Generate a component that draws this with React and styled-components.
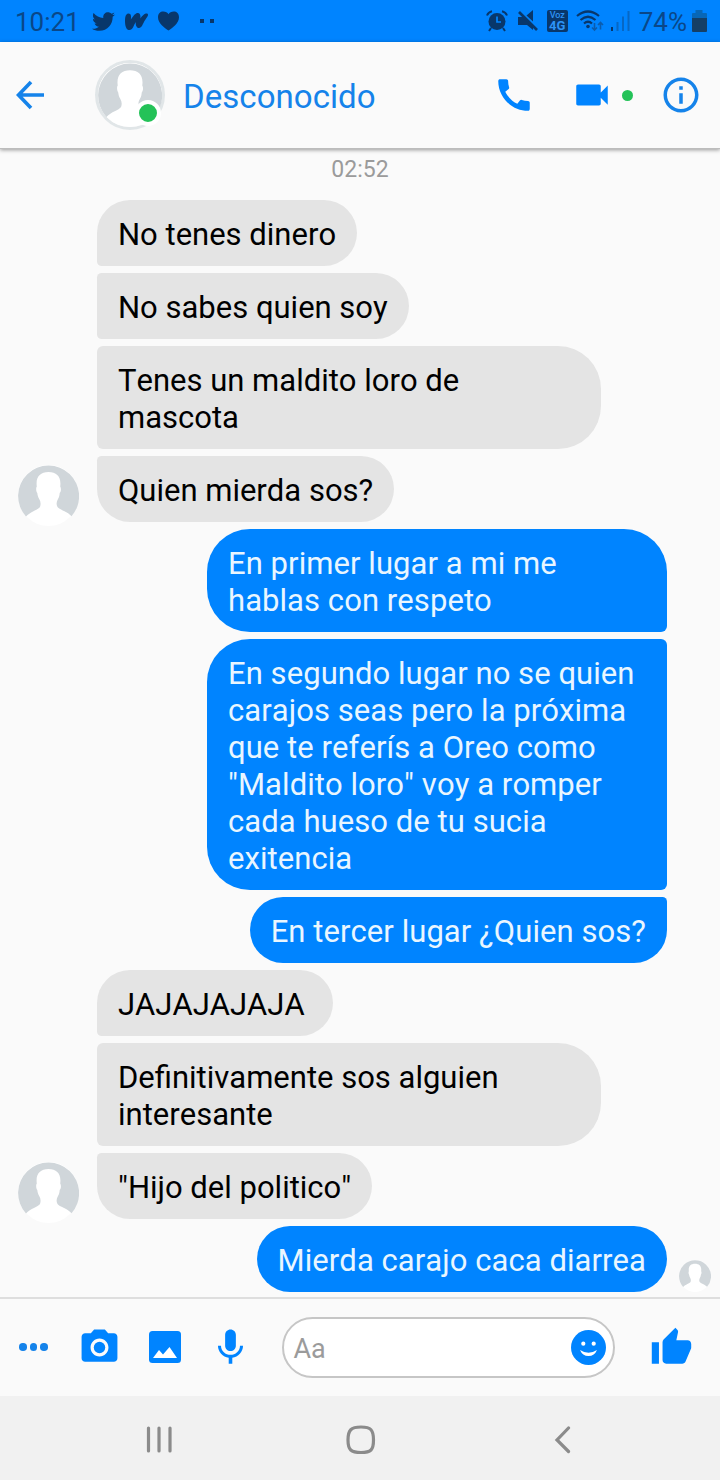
import React from "react";
import styled, { createGlobalStyle } from "styled-components";
import { FaTwitter } from "react-icons/fa";
import { SiWattpad } from "react-icons/si";
import {
    MdCall,
    MdVideocam,
    MdInfoOutline,
    MdPhotoCamera,
    MdMic,
    MdThumbUp,
} from "react-icons/md";

const messages = [
    { text: "No tenes dinero", pos: "first" },
    { text: "No sabes quien soy", pos: "middle" },
    { text: "Tenes un maldito loro de mascota", pos: "middle" },
    { text: "Quien mierda sos?", pos: "last" },
    { text: "En primer lugar a mi me hablas con respeto", pos: "first", mine: true },
    {
        text: 'En segundo lugar no se quien carajos seas pero la próxima que te referís a Oreo como "Maldito loro" voy a romper cada hueso de tu sucia exitencia',
        pos: "middle",
        mine: true,
    },
    { text: "En tercer lugar ¿Quien sos?", pos: "last", mine: true },
    { text: "JAJAJAJAJA\u00a0", pos: "first" },
    { text: "Definitivamente sos alguien interesante", pos: "middle" },
    { text: '"Hijo del politico"', pos: "last" },
    { text: "Mierda carajo caca diarrea", pos: "single", mine: true, seen: true },
];

const Person = ({ size }) => (
    <svg width={size} height={size} viewBox="0 0 61 61">
        <circle cx="30.5" cy="30.5" r="30.5" fill="#fff" />
        <path
            d="M8 51.5A30.5 30.5 0 1 1 53.5 51.2C49 46 41.5 45 39.5 42C38 39 38.5 36.5 40 34C41.3 32 41.5 30 41.7 28C43.5 26 43 22.5 42.2 21.5C43.5 12 39 7 30.5 7C22 7 17.5 12 18.8 21.5C18 22.5 17.8 26 19.3 28C19.5 30 20 32 21.2 34C22.7 36.5 23 39 22 42C20 45 12.5 46.5 8 51.5Z"
            fill="#d0d6da"
        />
    </svg>
);

const App = () => (
    <Screen>
        <Global />
        <StatusBar>
            <Clock>10:21</Clock>
            <FaTwitter size={23} />
            <SiWattpad size={23} />
            <svg width="21" height="20" viewBox="0 0 22 20" fill="currentColor">
                <path d="M11 20C7 17 0 12.5 0 6C0 2 2.5 0 5.5 0C8 0 10 1 11 3C12 1 14 0 16.5 0C19.5 0 22 2 22 6C22 12.5 15 17 11 20Z" />
            </svg>
            <Dots width="14" height="4" viewBox="0 0 14 4" fill="currentColor">
                <path d="M0 0h4v4H0zM10 0h4v4h-4z" />
            </Dots>
            <StatusRight>
                <svg width="22" height="22" viewBox="0 0 22 22" fill="none" stroke="#08376b">
                    <circle cx="11" cy="11.5" r="8.5" fill="#08376b" stroke="none" />
                    <path d="M1 5.5A7 7 0 0 1 6 1.2M21 5.5A7 7 0 0 0 16 1.2M5 18l-2 3M17 18l2 3" strokeWidth="2" />
                    <path d="M11 6.5V12h4" stroke="#0084ff" strokeWidth="1.7" />
                </svg>
                <Mute width="20" height="22" viewBox="0 0 20 22" fill="#08376b">
                    <path d="M0 7h5l10 9.5V20l-6-5H0ZM8.5 5.5L15 0v11.5Z" />
                    <path d="M1 2l18 18" stroke="#08376b" strokeWidth="2.6" />
                </Mute>
                <VoiceBadge>
                    <span>Voz</span>
                    <b>4G</b>
                </VoiceBadge>
                <Wifi width="28" height="22" viewBox="0 0 28 22" fill="none" stroke="#08376b" strokeWidth="2.2">
                    <path d="M1 6Q12 -3 23 6M4.5 10Q12 3.5 19.5 10M8 13.5Q12 10 16 13.5" />
                    <circle cx="12" cy="16.5" r="1.8" fill="#08376b" stroke="none" />
                    <path d="M18.5 13v7M16 17.5l2.5 2.5L21 17.5M24.5 19.5v-7M22 15l2.5-2.5L27 15" stroke="#0b5cad" strokeWidth="1.6" />
                </Wifi>
                <svg width="19" height="20" viewBox="0 0 19 20">
                    <path d="M0 16h2v4H0z" fill="#08376b" />
                    <path d="M5.5 11h2v9h-2zM11 5.5h2V20h-2zM16.5 0h2v20h-2z" fill="#0767c4" />
                </svg>
                <Percent>74%</Percent>
                <svg width="15" height="22" viewBox="0 0 15 22">
                    <path d="M3.5 0h7v3H14q1 0 1 1v4H0V4q0-1 1-1h2.5z" fill="#0767b8" />
                    <path d="M0 8h15v13q0 1-1 1H1q-1 0-1-1z" fill="#153f66" />
                </svg>
            </StatusRight>
        </StatusBar>
        <Header>
            <svg width="29" height="30" viewBox="0 0 29 30" fill="none" stroke="#1583ea" strokeWidth="3.6">
                <path d="M28 15H3M15 2L2.5 15L15 28" />
            </svg>
            <HeaderAvatar>
                <Person size={64} />
                <Online />
            </HeaderAvatar>
            <Name>Desconocido</Name>
            <Actions>
                <MdCall size={42} />
                <VideoCall>
                    <MdVideocam size={42} />
                    <Dot />
                </VideoCall>
                <MdInfoOutline size={42} color="#1583ea" />
            </Actions>
        </Header>
        <Thread>
            <Time>02:52</Time>
            {messages.map((m) => (
                <Row key={m.text} $mine={m.mine}>
                    {!m.mine && (
                        <Side>{m.pos === "last" && <Person size={61} />}</Side>
                    )}
                    <Bubble $mine={m.mine} $pos={m.pos}>
                        {m.text}
                    </Bubble>
                    {m.mine && <Seen>{m.seen && <Person size={32} />}</Seen>}
                </Row>
            ))}
        </Thread>
        <Composer>
            <More>
                <i />
                <i />
                <i />
            </More>
            <Tools>
                <MdPhotoCamera size={43} />
                <svg width="32" height="32" viewBox="0 0 32 32">
                    <rect width="32" height="32" rx="3.5" fill="#0084ff" />
                    <path d="M4 27L10 19L14 23.5L20.5 16L28 27Z" fill="#fff" />
                </svg>
                <MdMic size={43} />
            </Tools>
            <Input>
                <span>Aa</span>
                <svg width="35" height="35" viewBox="0 0 35 35">
                    <circle cx="17.5" cy="17.5" r="17.5" fill="#0084ff" />
                    <circle cx="12.3" cy="13.7" r="2.1" fill="#fff" />
                    <circle cx="22.7" cy="13.7" r="2.1" fill="#fff" />
                    <path d="M9 20Q17.5 25.5 26 20Q23.5 26 17.5 26Q11.5 26 9 20Z" fill="#fff" />
                </svg>
            </Input>
            <MdThumbUp size={43} />
        </Composer>
        <NavBar>
            <svg width="26" height="28" viewBox="0 0 26 28" {...navStroke}>
                <path d="M2.5 2v23M13 2v23M24 2v23" />
            </svg>
            <svg width="30" height="30" viewBox="0 0 30 30" {...navStroke}>
                <path d="M15 2C25 2 27.5 5 27.5 15C27.5 25 25 27.5 15 27.5C5 27.5 2 25 2 15C2 5 5 2 15 2Z" />
            </svg>
            <svg width="18" height="28" viewBox="0 0 18 28" {...navStroke}>
                <path d="M14.5 2L3 14L14.5 25.5" />
            </svg>
        </NavBar>
    </Screen>
);

export default App;

const navStroke = {
    fill: "none",
    stroke: "#8b8b8b",
    strokeWidth: 3.2,
    strokeLinecap: "round",
};

const Global = createGlobalStyle`
    * {
        box-sizing: border-box;
    }
    body {
        margin: 0;
        font-family: Roboto, sans-serif;
        background: #fafafa;
    }
    svg {
        display: block;
        flex-shrink: 0;
    }
`;

const Screen = styled.div`
    width: 720px;
    height: 1480px;
    display: flex;
    flex-direction: column;
    overflow: hidden;
    background: #fafafa;
`;

const StatusBar = styled.div`
    height: 42px;
    background: #0084ff;
    color: #08376b;
    display: flex;
    align-items: center;
    padding: 0 13px 0 15px;

    > svg {
        margin-right: 10px;
    }
`;

const Dots = styled.svg`
    margin-left: 11px;
`;

const Clock = styled.div`
    width: 77px;
    font-size: 26px;
    color: #0a4788;
    padding-top: 2px;
`;

const StatusRight = styled.div`
    margin-left: auto;
    display: flex;
    align-items: center;
    gap: 9px;
    margin-bottom: 1px;
`;

const Mute = styled.svg`
    margin-left: 1px;
`;

const Wifi = styled.svg`
    margin: 0 -2px 0 -1px;
`;

const VoiceBadge = styled.div`
    width: 21px;
    height: 22px;
    border-radius: 2px;
    background: #08376b;
    color: #2d93f5;
    display: flex;
    flex-direction: column;
    align-items: center;
    font-size: 9px;
    line-height: 10px;
    font-weight: 500;

    b {
        font-size: 13px;
        line-height: 12px;
    }
`;

const Percent = styled.div`
    font-size: 26px;
    color: #0a4788;
    padding-top: 3px;
    margin-right: -4px;
`;

const Header = styled.div`
    height: 107px;
    display: flex;
    align-items: center;
    padding: 0 18px 0 16px;
    position: relative;
    border-bottom: 1px solid #bcbcbc;
    box-shadow: 0 1px 4px rgba(0, 0, 0, 0.4);
`;

const HeaderAvatar = styled.div`
    width: 70px;
    height: 70px;
    margin-left: 50px;
    border: 3px solid #e1e6e8;
    border-radius: 50%;
    position: relative;
`;

const Online = styled.div`
    position: absolute;
    right: 1px;
    bottom: 1px;
    width: 26px;
    height: 26px;
    border: 4px solid #fff;
    border-radius: 50%;
    background: #24c258;
`;

const Name = styled.div`
    margin-left: 18px;
    padding-top: 2px;
    font-size: 33px;
    letter-spacing: 0.05px;
    color: #1583ea;
`;

const Actions = styled.div`
    margin-left: auto;
    display: flex;
    align-items: center;
    color: #0084ff;
`;

const VideoCall = styled.div`
    display: flex;
    align-items: center;
    margin: 0 27px 0 36px;
`;

const Dot = styled.div`
    width: 11px;
    height: 11px;
    margin-left: 9px;
    border-radius: 50%;
    background: #24c258;
`;

const Thread = styled.div`
    height: 1148px;
    display: flex;
    flex-direction: column;
    gap: 7px;
`;

const Time = styled.div`
    height: 44px;
    padding-top: 7px;
    text-align: center;
    font-size: 23px;
    line-height: 28px;
    color: #9b9b9b;
`;

const Row = styled.div`
    display: flex;
    align-items: flex-end;
    justify-content: ${(props) => (props.$mine ? "flex-end" : "flex-start")};
`;

const Side = styled.div`
    width: 97px;
    padding-left: 18px;
    margin-bottom: -4px;
`;

const Seen = styled.div`
    width: 53px;
    padding-left: 12px;
`;

const R = "43px";
const corners = {
    first: `${R} ${R} ${R} 6px`,
    middle: `6px ${R} ${R} 6px`,
    last: `6px ${R} ${R} ${R}`,
    single: R,
};
const mineCorners = {
    first: `${R} ${R} 6px ${R}`,
    middle: `${R} 6px 6px ${R}`,
    last: `${R} 6px ${R} ${R}`,
    single: R,
};

const Bubble = styled.div`
    max-width: ${(props) => (props.$mine ? 460 : 504)}px;
    padding: 16px 21px 13px;
    font-size: 31px;
    font-kerning: none;
    letter-spacing: ${(props) => (props.$mine ? "0.06px" : "normal")};
    line-height: 37px;
    color: ${(props) => (props.$mine ? "#e9f6ff" : "#000")};
    background: ${(props) => (props.$mine ? "#0084ff" : "#e4e4e4")};
    border-radius: ${(props) => (props.$mine ? mineCorners : corners)[props.$pos]};
`;

const Composer = styled.div`
    height: 99px;
    border-top: 2px solid #dedede;
    display: flex;
    align-items: center;
    padding: 0 27px 0 19px;
    color: #0084ff;
`;

const More = styled.div`
    display: flex;
    gap: 3px;
    margin-bottom: 1px;

    i {
        width: 7.5px;
        height: 7.5px;
        border-radius: 50%;
        background: #1583ea;
    }
`;

const Tools = styled.div`
    display: flex;
    align-items: center;
    gap: 28px;
    margin: 0 0 1px 30px;
`;

const Input = styled.div`
    width: 333px;
    height: 61px;
    margin: 0 auto 0 30px;
    border: 2px solid #c6c6c6;
    border-radius: 31px;
    background: #fff;
    display: flex;
    align-items: center;
    justify-content: space-between;
    padding: 0 7px 0 10px;
    font-size: 27px;
    color: #9b9b9b;

    span {
        padding-top: 2px;
    }
`;

const NavBar = styled.div`
    height: 84px;
    background: #f1f1f1;
    display: flex;
    align-items: center;
    justify-content: space-between;
    padding: 3px 148px 0 146px;

    svg:nth-child(2) {
        margin-right: 4px;
    }
`;
